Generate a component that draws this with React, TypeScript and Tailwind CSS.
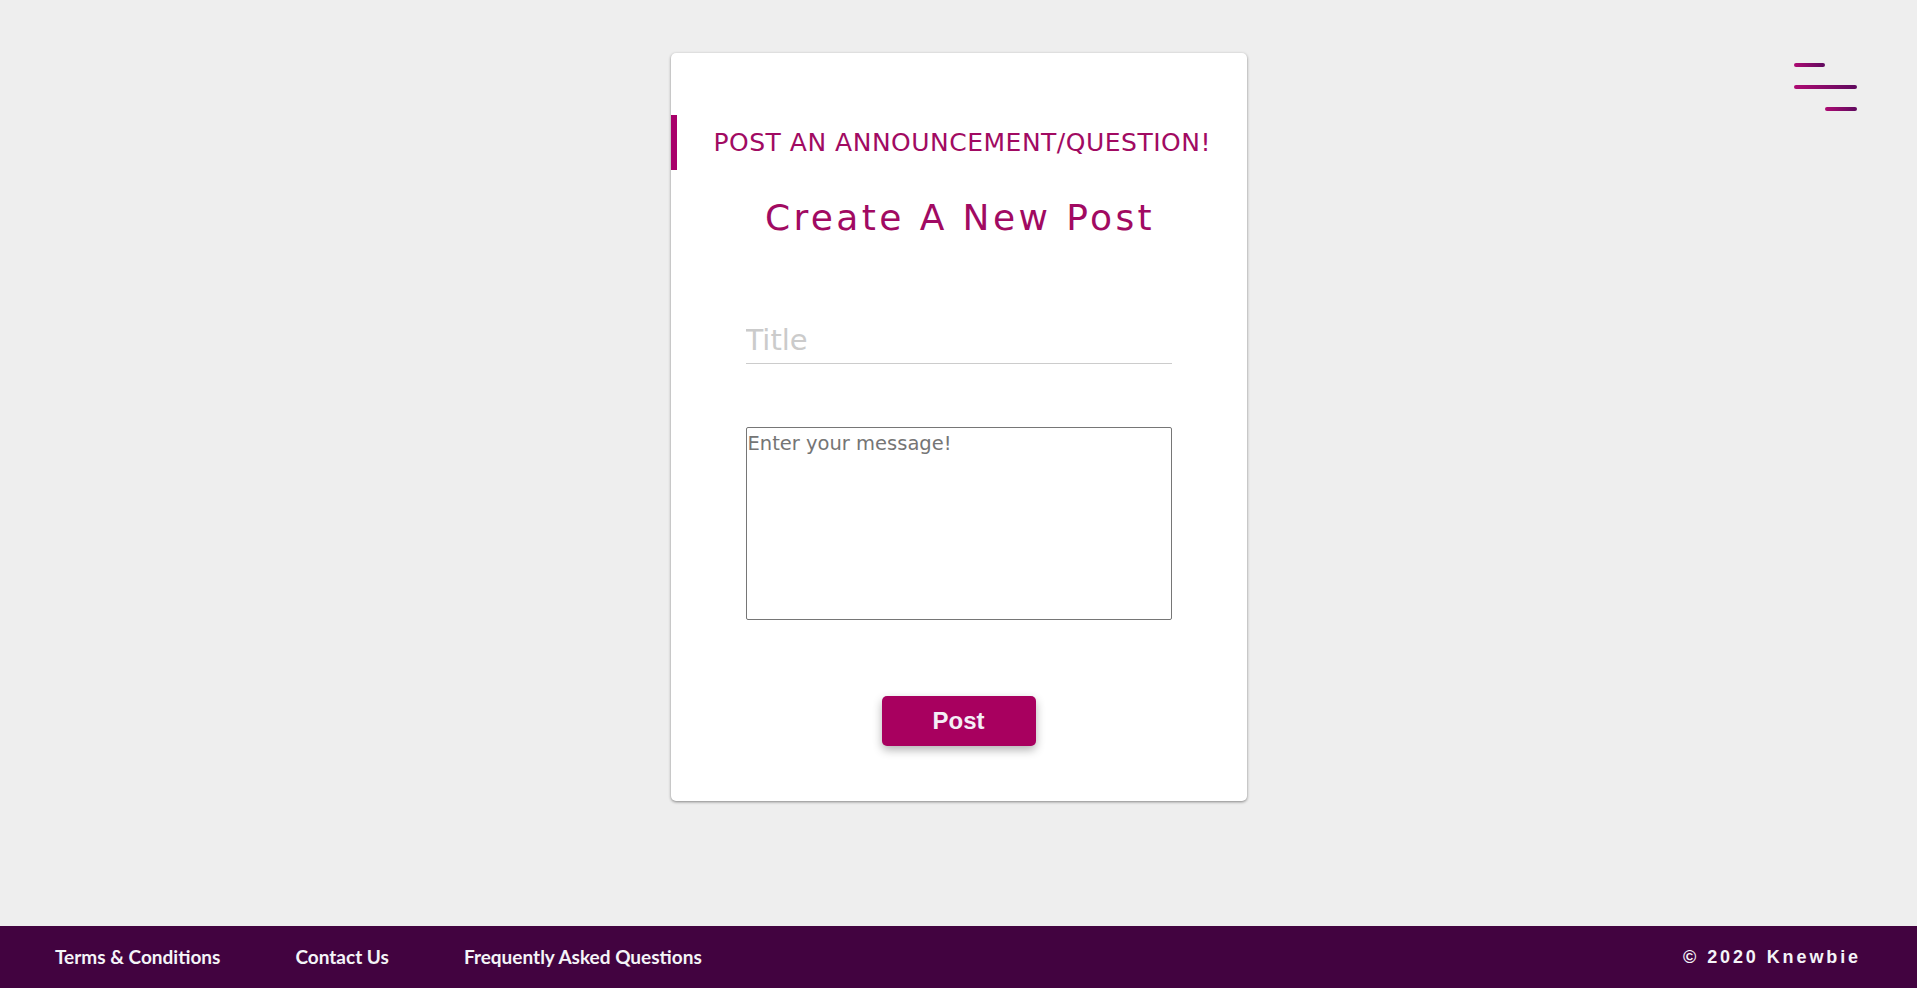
import React from "react";

const MONT = { fontFamily: '"DejaVu Sans", "Noto Sans", sans-serif' };

function MenuIcon() {
  return (
    <svg width="66" height="52" viewBox="0 0 66 52" className="block">
      <defs>
        <linearGradient id="mg" x1="0" y1="0" x2="1" y2="0">
          <stop offset="0" stopColor="#ad0a72" />
          <stop offset="1" stopColor="#5f0a5e" />
        </linearGradient>
      </defs>
      <rect x="1" y="2" width="31" height="4" rx="2" fill="url(#mg)" />
      <rect x="1" y="24" width="63" height="4" rx="2" fill="url(#mg)" />
      <rect x="32" y="46" width="32" height="4" rx="2" fill="url(#mg)" />
    </svg>
  );
}

export default function App() {
  return (
    <div className="h-screen w-full flex flex-col bg-[#eeeeee] overflow-hidden">
      <main className="relative flex-1 flex flex-col items-center">
        <div className="absolute top-[61px] left-[1793px]">
          <MenuIcon />
        </div>
        <div className="mt-[53px] w-[576px] h-[748px] bg-white rounded-[5px] shadow-[0_1px_3px_rgba(0,0,0,0.45)] flex flex-col">
          <div className="mt-[62px] h-[55px] border-l-[6px] border-[#a8006a] flex items-center pl-[37px]">
            <span
              style={MONT}
              className="text-[25px] leading-[55px] tracking-[0.5px] text-[#a10a62] whitespace-nowrap"
            >
              POST AN ANNOUNCEMENT/QUESTION!
            </span>
          </div>
          <h1
            style={MONT}
            className="mt-[26px] text-center text-[36px] leading-[44px] tracking-[3.4px] pl-[3px] text-[#a10a62] font-normal"
          >
            Create A New Post
          </h1>
          <input
            style={MONT}
            type="text"
            placeholder="Title"
            className="mt-[80px] mx-auto w-[426px] h-[44px] pb-[3px] px-0 border-b border-[#cccccc] text-[29px] text-[#333] placeholder:text-[#cbcbcb] outline-none bg-transparent"
          />
          <textarea
            style={MONT}
            placeholder="Enter your message!"
            className="mt-[63px] mx-auto w-[426px] h-[193px] p-[1px] border border-[#767676] rounded-[2px] text-[19.5px] text-[#333] placeholder:text-[#757575] resize-none outline-none block"
          />
          <button
            className="mt-[76px] mx-auto w-[154px] h-[50px] rounded-[5px] bg-[#a8005f] text-[#f4eef6] text-[24px] font-bold shadow-[0_4px_10px_rgba(0,0,0,0.3)]"
            style={{ fontFamily: '"Liberation Sans", Arial, sans-serif' }}
          >
            Post
          </button>
        </div>
      </main>
      <footer className="h-[62px] shrink-0 bg-[#420340] flex items-center justify-between pl-[55px] pr-[56px]">
        <nav
          className="flex items-center gap-[75px] text-[19px] font-bold text-[#f4f4f8]"
          style={{ fontFamily: 'Lato, "Noto Sans", sans-serif' }}
        >
          <a>Terms &amp; Conditions</a>
          <a>Contact Us</a>
          <a>Frequently Asked Questions</a>
        </nav>
        <div
          className="text-[18px] font-bold tracking-[2.9px] text-[#f4f4f8] whitespace-nowrap"
          style={{ fontFamily: '"Liberation Sans", Arial, sans-serif' }}
        >
          © 2020 Knewbie
        </div>
      </footer>
    </div>
  );
}
